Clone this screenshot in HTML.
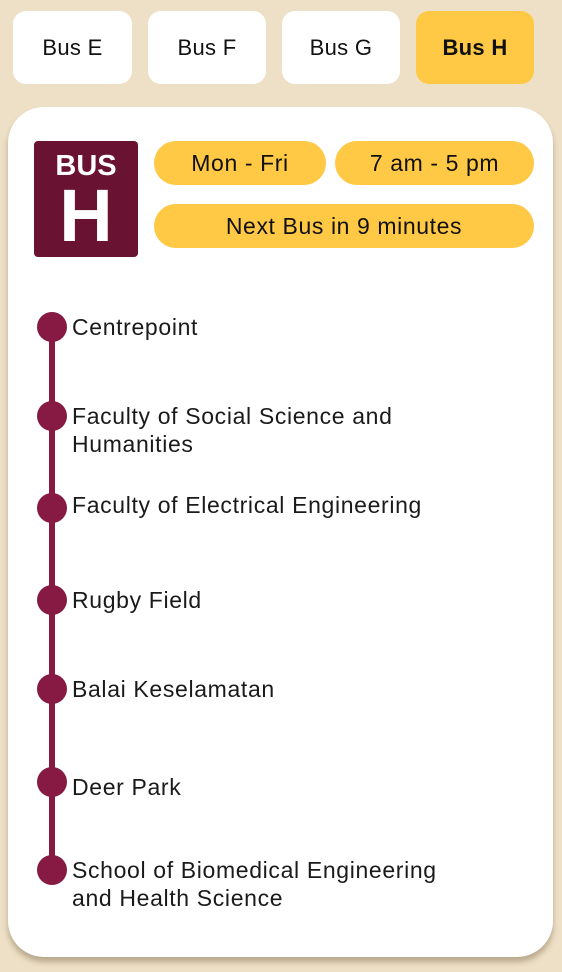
<!DOCTYPE html>
<html><head><style>
*{margin:0;padding:0;box-sizing:border-box}
body{width:562px;height:972px;background:#EEE0C6;font-family:"Liberation Sans",sans-serif;position:relative;overflow:hidden;color:#111}
.tab{position:absolute;top:11px;height:73px;background:#fff;border-radius:13px;font-size:22px;letter-spacing:0.3px;display:flex;align-items:center;justify-content:center}
.card{position:absolute;left:8px;top:107px;width:545px;height:850px;background:#fff;border-radius:36px;box-shadow:0 5px 6px rgba(120,100,70,.45)}
.logo{position:absolute;left:34px;top:141px;width:104px;height:116px;background:#6A1232;border-radius:4px;color:#fff;text-align:center;font-weight:bold}
.pill{position:absolute;height:44px;background:#FFC845;border-radius:22px;font-size:23px;letter-spacing:0.6px;display:flex;align-items:center;justify-content:center}
.line{position:absolute;left:49px;top:327px;width:6px;height:543px;background:#861A42}
.dot{position:absolute;left:37px;width:30px;height:30px;border-radius:50%;background:#861A42}
.st{position:absolute;left:72px;font-size:23px;line-height:28px;color:#1a1a1a;letter-spacing:0.65px;white-space:nowrap}
</style></head><body>
<div class="tab" style="left:13px;width:119px">Bus E</div>
<div class="tab" style="left:148px;width:118px">Bus F</div>
<div class="tab" style="left:282px;width:118px">Bus G</div>
<div class="tab" style="left:416px;width:118px;background:#FFC845;font-weight:bold">Bus H</div>
<div class="card"></div>
<div class="logo"><div style="font-size:29px;margin-top:10px;line-height:30px">BUS</div><div style="font-size:74px;line-height:70px">H</div></div>
<div class="pill" style="left:154px;top:141px;width:172px">Mon - Fri</div>
<div class="pill" style="left:335px;top:141px;width:199px">7 am - 5 pm</div>
<div class="pill" style="left:154px;top:204px;width:380px">Next Bus in 9 minutes</div>
<div class="line"></div>
<div class="dot" style="top:312px"></div><div class="st" style="top:313px">Centrepoint</div>
<div class="dot" style="top:401px"></div><div class="st" style="top:402px">Faculty of Social Science and<br>Humanities</div>
<div class="dot" style="top:493px"></div><div class="st" style="top:491px">Faculty of Electrical Engineering</div>
<div class="dot" style="top:585px"></div><div class="st" style="top:586px">Rugby Field</div>
<div class="dot" style="top:674px"></div><div class="st" style="top:675px">Balai Keselamatan</div>
<div class="dot" style="top:767px"></div><div class="st" style="top:773px">Deer Park</div>
<div class="dot" style="top:855px"></div><div class="st" style="top:856px">School of Biomedical Engineering<br>and Health Science</div>
</body></html>
